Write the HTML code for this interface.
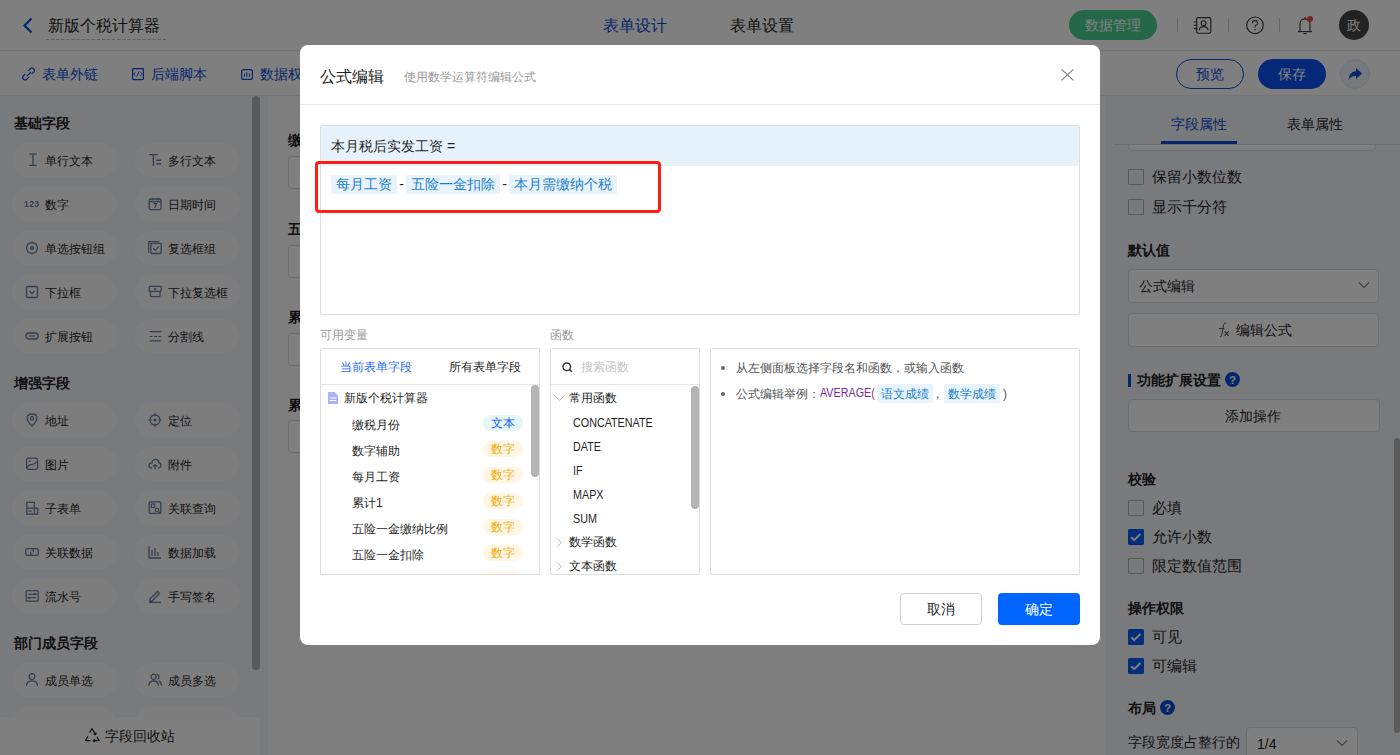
<!DOCTYPE html>
<html><head><meta charset="utf-8">
<style>
*{box-sizing:border-box;margin:0;padding:0}
html,body{width:1400px;height:755px;overflow:hidden;background:#fff;font-family:"Liberation Sans",sans-serif;color:#1f1f1f}
.a{position:absolute}
.t{position:absolute;white-space:nowrap;line-height:1}
#hdr{left:0;top:0;width:1400px;height:51px;background:#fff;border-bottom:1px solid #e8e8e8}
#tb{left:0;top:51px;width:1400px;height:45px;background:#fff;border-bottom:1px solid #eaeaea}
#lp{left:0;top:96px;width:268px;height:659px;background:#f3f4f8}
#cv{left:268px;top:96px;width:838px;height:659px;background:#fdfdfd}
#rp{left:1106px;top:96px;width:294px;height:659px;background:#f3f4f8}
.pill{position:absolute;width:105px;height:34px;border-radius:17px;background:#fbfbfd}
.pill .ic{position:absolute;left:13px;top:10px;width:14px;height:14px}
.pill .tx{position:absolute;left:33px;top:11px;font-size:12px;line-height:14px;color:#1f1f1f;white-space:nowrap}
.sec{position:absolute;left:14px;font-size:14px;font-weight:bold;color:#222;line-height:14px}
#ov{left:0;top:0;width:1400px;height:755px;background:rgba(0,0,0,0.5)}
#md{left:300px;top:45px;width:800px;height:600px;background:#fff;border-radius:8px}
.cb{position:absolute;left:1128px;width:16px;height:16px;border:1px solid #b0b0b0;border-radius:1px;background:transparent}
.cb.on{background:#0a5cf5;border-color:#0a5cf5;border-radius:1px}
.rl{position:absolute;left:1152px;font-size:14.7px;line-height:14px;color:#1f1f1f;white-space:nowrap}
.rh{position:absolute;left:1128px;font-size:14px;font-weight:bold;line-height:14px;color:#222;white-space:nowrap}
.tag{position:absolute;left:483px;width:40px;margin-top:-1px;height:16px;border-radius:8px;font-size:12px;line-height:16px;text-align:center}
.tag.n{background:#fff6e3;color:#f5ab0c}
.tag.s{background:#e5f7f7;color:#1660ff}
.vr{position:absolute;left:352px;margin-top:1px;font-size:12px;line-height:12px;color:#1f1f1f;white-space:nowrap}
.fn{position:absolute;left:573px;margin-top:1px;font-size:12.5px;transform:scaleX(0.86);transform-origin:0 0;line-height:12px;color:#1f1f1f;white-space:nowrap}
.tok{display:inline-block;background:#e8f3fc;color:#1a7fd0;padding:0 5px;border-radius:2px;height:19px;line-height:19px}
</style></head><body>
<!-- header -->
<div id="hdr" class="a"></div>
<svg class="a" style="left:22px;top:17px" width="12" height="17" viewBox="0 0 12 17"><path d="M9.5 1.5 L2.5 8.5 L9.5 15.5" fill="none" stroke="#0a4dd6" stroke-width="2.2"/></svg>
<div class="t" style="left:48px;top:18px;font-size:16px;color:#1f1f1f">新版个税计算器</div>
<div class="a" style="left:46px;top:39px;width:120px;border-top:1px dashed #bbb"></div>
<div class="t" style="left:603px;top:18px;font-size:16px;color:#0a4dd6">表单设计</div>
<div class="t" style="left:730px;top:18px;font-size:16px;color:#1f1f1f">表单设置</div>
<div class="a" style="left:1069px;top:10px;width:88px;height:30px;border-radius:15px;background:#48cf93"></div>
<div class="t" style="left:1085px;top:18px;font-size:14px;color:#fff">数据管理</div>
<div class="a" style="left:1177px;top:18px;width:1px;height:14px;background:#ccc"></div>
<div class="a" style="left:1228px;top:18px;width:1px;height:14px;background:#ccc"></div>
<div class="a" style="left:1279px;top:18px;width:1px;height:14px;background:#ccc"></div>
<svg class="a" style="left:1190px;top:10px" width="130" height="30" viewBox="1190 10 130 30">
<rect x="1196.6" y="17.6" width="14.2" height="15.6" rx="1.6" fill="none" stroke="#3a3a3a" stroke-width="1.15"/>
<path d="M1193.8 22h3.4M1193.8 25.3h3.4M1193.8 28.6h3.4" stroke="#3a3a3a" stroke-width="1.1"/>
<circle cx="1203.6" cy="23.2" r="2.4" fill="none" stroke="#3a3a3a" stroke-width="1.1"/>
<path d="M1199.2 30.2Q1199.6 26.6 1203.6 26.6Q1207.6 26.6 1208 30.2" fill="none" stroke="#3a3a3a" stroke-width="1.1"/>
<circle cx="1255" cy="25.3" r="8.3" fill="none" stroke="#3a3a3a" stroke-width="1.15"/>
<path d="M1252.4 23.2Q1252.4 20.6 1255 20.6Q1257.6 20.6 1257.6 23Q1257.6 24.6 1255.6 25.6Q1255 26 1255 27.6" fill="none" stroke="#3a3a3a" stroke-width="1.15"/>
<circle cx="1255" cy="29.8" r="0.8" fill="#333"/>
<path d="M1300 31.5V24Q1300 19 1305 19Q1310 19 1310 24V31.5" fill="none" stroke="#3a3a3a" stroke-width="1.15"/>
<path d="M1298 31.6h14" stroke="#3a3a3a" stroke-width="1.15"/>
<path d="M1305 17v2" stroke="#3a3a3a" stroke-width="1.1"/>
<path d="M1303.4 33.6h3.2" stroke="#3a3a3a" stroke-width="1.1"/>
<circle cx="1310" cy="19" r="3" fill="#f04a46"/>
</svg>
<div class="a" style="left:1339px;top:10px;width:30px;height:30px;border-radius:15px;background:#454545"></div>
<div class="t" style="left:1347px;top:18px;font-size:14px;color:#fff">政</div>
<!-- toolbar -->
<div id="tb" class="a"></div>
<svg class="a" style="left:20px;top:65px" width="17" height="17" viewBox="20 65 17 17"><path d="M28.2 70.8L30.3 68.7Q32 67.2 33.6 68.8Q35.2 70.4 33.7 72.1L31.6 74.2M28.8 77.2L26.7 79.3Q25 80.8 23.4 79.2Q21.8 77.6 23.3 75.9L25.4 73.8M26.8 76.2L31 72" fill="none" stroke="#0a4dd6" stroke-width="1.2"/></svg>
<div class="t" style="left:42px;top:67px;font-size:14px;color:#0a4dd6">表单外链</div>
<svg class="a" style="left:130px;top:65px" width="17" height="17" viewBox="130 65 17 17"><rect x="132.6" y="68.6" width="10.8" height="11" rx="0.8" fill="none" stroke="#0a4dd6" stroke-width="1.2"/><path d="M135.4 72.4L133.6 74.2L135.4 75.8M140.6 72.4L142.4 74.2L140.6 75.8M139.2 71.4L136.8 76.6" fill="none" stroke="#0a4dd6" stroke-width="1"/></svg>
<div class="t" style="left:151px;top:67px;font-size:14px;color:#0a4dd6">后端脚本</div>
<svg class="a" style="left:238px;top:65px" width="17" height="17" viewBox="238 65 17 17"><rect x="241.6" y="69.6" width="10.8" height="9.8" rx="2" fill="none" stroke="#0a4dd6" stroke-width="1.2"/><path d="M244.4 73.6V76.8M246.8 72.2V76.8M249.4 73.6V76.8" stroke="#0a4dd6" stroke-width="1"/></svg>
<div class="t" style="left:260px;top:67px;font-size:14px;color:#0a4dd6">数据权限</div>
<div class="a" style="left:1176px;top:59px;width:68px;height:30px;border-radius:15px;border:1px solid #0a4dd6;background:#fff"></div>
<div class="t" style="left:1196px;top:67px;font-size:14px;color:#0a4dd6">预览</div>
<div class="a" style="left:1258px;top:59px;width:68px;height:30px;border-radius:15px;background:#0a52f0"></div>
<div class="t" style="left:1278px;top:67px;font-size:14px;color:#fff">保存</div>
<div class="a" style="left:1340px;top:59px;width:30px;height:30px;border-radius:15px;background:#eef2fa;border:1px solid #dde3f0"></div>
<svg class="a" style="left:1347px;top:66px" width="16" height="16" viewBox="0 0 16 16"><path d="M9 2 L15 7.5 L9 13 L9 10 Q4 9.5 1.5 14 Q2 6 9 5 Z" fill="#0a4dd6"/></svg>
<!-- panels -->
<div id="lp" class="a"></div>
<div id="cv" class="a"></div>
<div class="sec" style="top:116px">基础字段</div>
<div class="pill" style="left:12px;top:143px"><svg class="ic" viewBox="0 0 14 14"><path d="M4.2 1.2h7.6M4.2 12.4h7.6M8 1.2v11.2" stroke="#6d7c9e" stroke-width="1.3" fill="none"/></svg><div class="tx">单行文本</div></div>
<div class="pill" style="left:135px;top:143px"><svg class="ic" viewBox="0 0 14 14"><path d="M1.2 1.6h8.4M5.4 1.6V13.2M8.2 7.2h5M8.2 10.8h5" stroke="#6d7c9e" stroke-width="1.4" fill="none"/></svg><div class="tx">多行文本</div></div>
<div class="pill" style="left:12px;top:187px"><svg class="ic" style="left:12px;width:16px" viewBox="0 0 16 14"><text x="0" y="9.6" font-size="8.5" font-weight="bold" fill="#6d7c9e" font-family="Liberation Sans" textLength="15">123</text></svg><div class="tx">数字</div></div>
<div class="pill" style="left:135px;top:187px"><svg class="ic" viewBox="0 0 14 14"><rect x="1.2" y="2" width="11.8" height="10.6" rx="1.6" fill="none" stroke="#6d7c9e" stroke-width="1.3"/><path d="M1.2 4.6h11.8M4 0.8v2.6M10.2 0.8v2.6M5.6 6.6h3L6.6 10.8" fill="none" stroke="#6d7c9e" stroke-width="1.2"/></svg><div class="tx">日期时间</div></div>
<div class="pill" style="left:12px;top:231px"><svg class="ic" viewBox="0 0 14 14"><circle cx="7" cy="7" r="5.5" fill="none" stroke="#6d7c9e" stroke-width="1.3"/><circle cx="7" cy="7" r="2" fill="#6d7c9e"/></svg><div class="tx">单选按钮组</div></div>
<div class="pill" style="left:135px;top:231px"><svg class="ic" viewBox="0 0 14 14"><path d="M0.7 12V0.7h10.6" fill="none" stroke="#6d7c9e" stroke-width="1.2"/><rect x="2.9" y="2.3" width="10.2" height="10.2" rx="0.8" fill="none" stroke="#6d7c9e" stroke-width="1.3"/><path d="M5.2 7.2l2 2L11 5.4" fill="none" stroke="#6d7c9e" stroke-width="1.3"/></svg><div class="tx">复选框组</div></div>
<div class="pill" style="left:12px;top:275px"><svg class="ic" viewBox="0 0 14 14"><rect x="1.5" y="1.5" width="11" height="11" rx="1" fill="none" stroke="#6d7c9e" stroke-width="1.3"/><path d="M4.5 6l2.5 2.5L9.5 6" fill="none" stroke="#6d7c9e" stroke-width="1.3"/></svg><div class="tx">下拉框</div></div>
<div class="pill" style="left:135px;top:275px"><svg class="ic" viewBox="0 0 14 14"><rect x="1.2" y="1.4" width="12" height="5" rx="0.8" fill="none" stroke="#6d7c9e" stroke-width="1.3"/><path d="M2.4 6.4V10.8Q2.4 11.6 3.2 11.6H11.2Q12 11.6 12 10.8V6.4M6 3.4l1.2 1.2L8.4 3.4" fill="none" stroke="#6d7c9e" stroke-width="1.3"/></svg><div class="tx">下拉复选框</div></div>
<div class="pill" style="left:12px;top:319px"><svg class="ic" viewBox="0 0 14 14"><rect x="0.8" y="4" width="12.4" height="6" rx="3" fill="none" stroke="#6d7c9e" stroke-width="1.4"/><path d="M4 7h6" stroke="#6d7c9e" stroke-width="1.2"/></svg><div class="tx">扩展按钮</div></div>
<div class="pill" style="left:135px;top:319px"><svg class="ic" viewBox="0 0 14 14"><path d="M1.6 2.7h11.8M1.6 7.5h3M6.1 7.5h3M10.4 7.5h3M1.6 11.8h11.8" stroke="#6d7c9e" stroke-width="1.2"/></svg><div class="tx">分割线</div></div>
<div class="sec" style="top:376px">增强字段</div>
<div class="pill" style="left:12px;top:403px"><svg class="ic" viewBox="0 0 14 14"><path d="M7 13 Q2 8 2 5.5 Q2 1 7 1 Q12 1 12 5.5 Q12 8 7 13Z" fill="none" stroke="#6d7c9e" stroke-width="1.3"/><circle cx="7" cy="5.5" r="1.8" fill="none" stroke="#6d7c9e" stroke-width="1.2"/></svg><div class="tx">地址</div></div>
<div class="pill" style="left:135px;top:403px"><svg class="ic" viewBox="0 0 14 14"><circle cx="7" cy="7" r="5" fill="none" stroke="#6d7c9e" stroke-width="1.3"/><circle cx="7" cy="7" r="1.5" fill="#6d7c9e"/><path d="M7 0.5v3M7 10.5v3M0.5 7h3M10.5 7h3" stroke="#6d7c9e" stroke-width="1.2"/></svg><div class="tx">定位</div></div>
<div class="pill" style="left:12px;top:447px"><svg class="ic" viewBox="0 0 14 14"><rect x="1.6" y="1.2" width="11" height="11.2" rx="1.8" fill="none" stroke="#6d7c9e" stroke-width="1.3"/><path d="M2.4 10.6Q4 7 6.6 7.6Q9 8 11.8 4.6" fill="none" stroke="#6d7c9e" stroke-width="1.2"/><circle cx="4.6" cy="4.2" r="0.9" fill="#6d7c9e"/></svg><div class="tx">图片</div></div>
<div class="pill" style="left:135px;top:447px"><svg class="ic" viewBox="0 0 14 14"><path d="M4 11 Q0.5 11 1 8 Q1.5 5.5 4 6 Q4.5 2 8 2.5 Q11 3 11 6 Q13.5 6.5 13 9 Q12.5 11 10 11" fill="none" stroke="#6d7c9e" stroke-width="1.3"/><path d="M7 12.5V7.5M5 9.5l2-2 2 2" fill="none" stroke="#6d7c9e" stroke-width="1.2"/></svg><div class="tx">附件</div></div>
<div class="pill" style="left:12px;top:491px"><svg class="ic" viewBox="0 0 14 14"><path d="M1.8 13.2V1.4H9.4V13.2ZM9.4 7.2h3.4v6H9.4M1.8 7.2h7.6M3.6 10.2h3" fill="none" stroke="#6d7c9e" stroke-width="1.3"/></svg><div class="tx">子表单</div></div>
<div class="pill" style="left:135px;top:491px"><svg class="ic" viewBox="0 0 14 14"><rect x="1.2" y="0.8" width="11.6" height="11.6" rx="1" fill="none" stroke="#6d7c9e" stroke-width="1.3"/><rect x="3.4" y="3" width="3.4" height="3.4" fill="none" stroke="#6d7c9e" stroke-width="1.1"/><circle cx="9" cy="9" r="1.8" fill="#fbfbfd" stroke="#6d7c9e" stroke-width="1.1"/><path d="M10.3 10.3l2.4 2.4" stroke="#6d7c9e" stroke-width="1.2"/></svg><div class="tx">关联查询</div></div>
<div class="pill" style="left:12px;top:535px"><svg class="ic" viewBox="0 0 14 14"><path d="M6.6 10.4H2.2Q0.8 10.4 0.8 9V5Q0.8 3.6 2.2 3.6H7Q8.4 3.6 8.4 5V7.6M7.4 3.6H11.8Q13.2 3.6 13.2 5V9Q13.2 10.4 11.8 10.4H7Q5.6 10.4 5.6 9V6.4" fill="none" stroke="#6d7c9e" stroke-width="1.3"/></svg><div class="tx">关联数据</div></div>
<div class="pill" style="left:135px;top:535px"><svg class="ic" viewBox="0 0 14 14"><path d="M1 1v12h12M4 11V5M7 11V3M10 11V7" fill="none" stroke="#6d7c9e" stroke-width="1.3"/></svg><div class="tx">数据加载</div></div>
<div class="pill" style="left:12px;top:579px"><svg class="ic" viewBox="0 0 14 14"><rect x="1.2" y="1.6" width="12" height="10.6" rx="1" fill="none" stroke="#6d7c9e" stroke-width="1.3"/><path d="M3.2 5.4h7.8L9.4 4M11 8.6H3.2L4.8 10" fill="none" stroke="#6d7c9e" stroke-width="1.1"/></svg><div class="tx">流水号</div></div>
<div class="pill" style="left:135px;top:579px"><svg class="ic" viewBox="0 0 14 14"><path d="M2 10 L9.5 2.5 L11.5 4.5 L4 12 H2Z M1 13.5h12" fill="none" stroke="#6d7c9e" stroke-width="1.3"/></svg><div class="tx">手写签名</div></div>
<div class="sec" style="top:636px">部门成员字段</div>
<div class="pill" style="left:12px;top:663px"><svg class="ic" viewBox="0 0 14 14"><circle cx="7" cy="3.6" r="2.9" fill="none" stroke="#6d7c9e" stroke-width="1.3"/><path d="M1.4 12.8Q1.6 7.8 7 7.8Q12.4 7.8 12.6 12.8" fill="none" stroke="#6d7c9e" stroke-width="1.3"/></svg><div class="tx">成员单选</div></div>
<div class="pill" style="left:135px;top:663px"><svg class="ic" viewBox="0 0 14 14"><circle cx="5.6" cy="3.8" r="2.6" fill="none" stroke="#6d7c9e" stroke-width="1.3"/><path d="M0.8 12.6Q1 8 5.6 8Q10.2 8 10.4 12.6M8.6 1.4Q11 1.6 11 3.9Q11 5.6 9.4 6.2M10.6 7.8Q13.2 8.6 13.4 12.6" fill="none" stroke="#6d7c9e" stroke-width="1.3"/></svg><div class="tx">成员多选</div></div>
<div class="pill" style="left:12px;top:707px"><svg class="ic" viewBox="0 0 14 14"><circle cx="7" cy="4.5" r="3" fill="none" stroke="#6d7c9e" stroke-width="1.3"/><path d="M1.5 13.5 Q1.5 8.5 7 8.5 Q12.5 8.5 12.5 13.5" fill="none" stroke="#6d7c9e" stroke-width="1.3"/></svg><div class="tx">部门单选</div></div>
<div class="pill" style="left:135px;top:707px"><svg class="ic" viewBox="0 0 14 14"><circle cx="5.5" cy="4.5" r="2.7" fill="none" stroke="#6d7c9e" stroke-width="1.3"/><path d="M0.8 13 Q0.8 8.5 5.5 8.5 Q10.2 8.5 10.2 13 M9 2 Q11.5 2.5 11 5.5 M11 8.5 Q13.5 9.5 13.5 13" fill="none" stroke="#6d7c9e" stroke-width="1.3"/></svg><div class="tx">部门多选</div></div>
<div class="a" style="left:252px;top:96px;width:8px;height:574px;border-radius:4px;background:#b4b4b4"></div>
<div class="a" style="left:0;top:717px;width:260px;height:38px;background:#fff"></div>
<svg class="a" style="left:82px;top:726px" width="20" height="18" viewBox="82 726 20 18"><path d="M89.6 732.6L92 728.6L95.4 734.4M93.6 734.2L95.6 734.6L96.2 732.6M97 736.8L99 740.6H93.4M94.8 739.2L93.2 740.6L94.8 742M90.6 740.6H85.4L88 736.2" fill="none" stroke="#222" stroke-width="1.2" stroke-linejoin="round"/></svg>
<div class="t" style="left:105px;top:729px;font-size:14px;color:#1f1f1f">字段回收站</div>
<div id="rp" class="a"></div>
<div class="t" style="left:288px;top:133px;font-size:14px;font-weight:bold;color:#1f1f1f">缴税月份</div>
<div class="a" style="left:288px;top:156px;width:300px;height:33px;border:1px solid #d9d9d9;border-radius:4px;background:#fff"></div>
<div class="t" style="left:288px;top:222px;font-size:14px;font-weight:bold;color:#1f1f1f">五险一金缴纳比例</div>
<div class="a" style="left:288px;top:245px;width:300px;height:33px;border:1px solid #d9d9d9;border-radius:4px;background:#fff"></div>
<div class="t" style="left:288px;top:310px;font-size:14px;font-weight:bold;color:#1f1f1f">累计1</div>
<div class="a" style="left:288px;top:333px;width:300px;height:33px;border:1px solid #d9d9d9;border-radius:4px;background:#fff"></div>
<div class="t" style="left:288px;top:398px;font-size:14px;font-weight:bold;color:#1f1f1f">累计2</div>
<div class="a" style="left:288px;top:420px;width:300px;height:33px;border:1px solid #d9d9d9;border-radius:4px;background:#fff"></div>
<div class="a" style="left:1128px;top:131px;width:248px;height:20px;border:1px solid #ddd;border-radius:4px;background:#fff"></div>
<div class="a" style="left:1106px;top:96px;width:294px;height:48px;background:#f3f4f8"></div>
<div class="t" style="left:1171px;top:117px;font-size:14px;color:#0a4dd6">字段属性</div>
<div class="t" style="left:1287px;top:117px;font-size:14px;color:#1f1f1f">表单属性</div>
<div class="a" style="left:1114px;top:144px;width:286px;height:1px;background:#dcdcdc"></div>
<div class="a" style="left:1161px;top:141px;width:76px;height:3px;background:#0a4dd6"></div>
<div class="cb" style="top:169px"></div><div class="rl" style="top:170px">保留小数位数</div>
<div class="cb" style="top:199px"></div><div class="rl" style="top:200px">显示千分符</div>
<div class="rh" style="top:243px">默认值</div>
<div class="a" style="left:1128px;top:269px;width:251px;height:34px;border:1px solid #ddd;border-radius:4px;background:#fff"></div>
<div class="t" style="left:1139px;top:279px;font-size:14px;color:#1f1f1f">公式编辑</div>
<svg class="a" style="left:1358px;top:281px" width="12" height="8" viewBox="0 0 12 8"><path d="M1 1.5l5 5 5-5" fill="none" stroke="#888" stroke-width="1.2"/></svg>
<div class="a" style="left:1128px;top:313px;width:251px;height:34px;border:1px solid #ddd;border-radius:4px;background:#fff"></div>
<svg class="a" style="left:1216px;top:321px" width="16" height="17" viewBox="1216 321 16 17"><path d="M1226.2 323.2Q1224.2 322.6 1223.6 325L1221.6 335.6Q1221 337 1219.8 336.6M1218.8 328.6h5.6" fill="none" stroke="#555" stroke-width="1"/><path d="M1224.6 331.4l4 4.4M1228.6 331.4l-4 4.4" stroke="#555" stroke-width="1.1"/></svg>
<div class="t" style="left:1236px;top:323px;font-size:14px;color:#1f1f1f">编辑公式</div>
<div class="a" style="left:1128px;top:374px;width:3px;height:13px;background:#0a4dd6"></div>
<div class="rh" style="left:1137px;top:373px">功能扩展设置</div>
<svg class="a" style="left:1225px;top:372px" width="15" height="15" viewBox="0 0 15 15"><circle cx="7.5" cy="7.5" r="7.5" fill="#0a4dd6"/><text x="7.5" y="11.5" font-size="11" font-weight="bold" text-anchor="middle" fill="#fff" font-family="Liberation Sans">?</text></svg>
<div class="a" style="left:1128px;top:399px;width:252px;height:33px;border:1px solid #ddd;border-radius:4px;background:#fff"></div>
<div class="t" style="left:1225px;top:409px;font-size:14px;color:#1f1f1f">添加操作</div>
<div class="rh" style="top:472px">校验</div>
<div class="cb" style="top:500px"></div><div class="rl" style="top:501px">必填</div>
<div class="cb on" style="top:529px"><svg width="14" height="14" viewBox="0 0 14 14" style="position:absolute;left:0;top:0"><path d="M2.2 7.2l3 3 6.2-6.2" fill="none" stroke="#fff" stroke-width="2"/></svg></div><div class="rl" style="top:530px">允许小数</div>
<div class="cb" style="top:558px"></div><div class="rl" style="top:559px">限定数值范围</div>
<div class="rh" style="top:601px">操作权限</div>
<div class="cb on" style="top:629px"><svg width="14" height="14" viewBox="0 0 14 14" style="position:absolute;left:0;top:0"><path d="M2.2 7.2l3 3 6.2-6.2" fill="none" stroke="#fff" stroke-width="2"/></svg></div><div class="rl" style="top:630px">可见</div>
<div class="cb on" style="top:658px"><svg width="14" height="14" viewBox="0 0 14 14" style="position:absolute;left:0;top:0"><path d="M2.2 7.2l3 3 6.2-6.2" fill="none" stroke="#fff" stroke-width="2"/></svg></div><div class="rl" style="top:659px">可编辑</div>
<div class="rh" style="top:701px">布局</div>
<svg class="a" style="left:1160px;top:700px" width="15" height="15" viewBox="0 0 15 15"><circle cx="7.5" cy="7.5" r="7.5" fill="#0a4dd6"/><text x="7.5" y="11.5" font-size="11" font-weight="bold" text-anchor="middle" fill="#fff" font-family="Liberation Sans">?</text></svg>
<div class="t" style="left:1128px;top:735px;font-size:14px;color:#1f1f1f">字段宽度占整行的</div>
<div class="a" style="left:1246px;top:727px;width:112px;height:34px;border:1px solid #ddd;border-radius:4px;background:#fff"></div>
<div class="t" style="left:1257px;top:737px;font-size:14px;color:#1f1f1f">1/4</div>
<svg class="a" style="left:1336px;top:739px" width="12" height="8" viewBox="0 0 12 8"><path d="M1 1.5l5 5 5-5" fill="none" stroke="#888" stroke-width="1.2"/></svg>
<div class="a" style="left:1394px;top:438px;width:6px;height:295px;border-radius:3px;background:#b4b4b4"></div>
<div id="ov" class="a"></div>
<div id="md" class="a"></div>
<div class="t" style="left:320px;top:69px;font-size:16px;color:#222">公式编辑</div>
<div class="t" style="left:404px;top:71px;font-size:12px;color:#999">使用数学运算符编辑公式</div>
<svg class="a" style="left:1058px;top:66px" width="20" height="18" viewBox="1058 66 20 18"><path d="M1061.6 69.4L1073.4 80.4M1073.4 69.4L1061.6 80.4" stroke="#7a7a7a" stroke-width="1.1"/></svg>
<div class="a" style="left:300px;top:104px;width:800px;height:1px;background:#e8e8e8"></div>
<div class="a" style="left:320px;top:125px;width:760px;height:190px;border:1px solid #ddd;border-radius:2px;background:#fff"></div>
<div class="a" style="left:321px;top:126px;width:758px;height:40px;background:#e6f3fd"></div>
<div class="t" style="left:331px;top:139px;font-size:14px;color:#1f1f1f">本月税后实发工资 =</div>
<div class="t" style="left:331px;top:175px;font-size:14px;color:#1f1f1f"><span class="tok">每月工资</span><span style="display:inline-block;width:9px;text-align:center">-</span><span class="tok">五险一金扣除</span><span style="display:inline-block;width:9px;text-align:center">-</span><span class="tok">本月需缴纳个税</span></div>
<div class="a" style="left:315px;top:161px;width:346px;height:52px;border:3px solid #fe1d12;border-radius:4px"></div>
<div class="t" style="left:320px;top:329px;font-size:12px;color:#999">可用变量</div>
<div class="t" style="left:550px;top:329px;font-size:12px;color:#999">函数</div>
<div class="a" style="left:320px;top:348px;width:220px;height:227px;border:1px solid #ddd;border-radius:2px;background:#fff"></div>
<div class="a" style="left:321px;top:384px;width:218px;height:1px;background:#e5e5e5"></div>
<div class="t" style="left:340px;top:361px;font-size:12px;color:#1f6bff">当前表单字段</div>
<div class="t" style="left:449px;top:361px;font-size:12px;color:#1f1f1f">所有表单字段</div>
<svg class="a" style="left:328px;top:392px" width="10" height="12" viewBox="0 0 10 12"><path d="M0 0h6.5L10 3.5V12H0Z" fill="#a9b3f7"/><path d="M2 6h6M2 8.5h6" stroke="#fff" stroke-width="1"/></svg>
<div class="t" style="left:344px;top:392px;font-size:12px;color:#1f1f1f">新版个税计算器</div>
<div class="vr" style="top:418px">缴税月份</div>
<div class="tag s" style="top:416px">文本</div>
<div class="vr" style="top:444px">数字辅助</div>
<div class="tag n" style="top:442px">数字</div>
<div class="vr" style="top:470px">每月工资</div>
<div class="tag n" style="top:468px">数字</div>
<div class="vr" style="top:496px">累计1</div>
<div class="tag n" style="top:494px">数字</div>
<div class="vr" style="top:522px">五险一金缴纳比例</div>
<div class="tag n" style="top:520px">数字</div>
<div class="vr" style="top:548px">五险一金扣除</div>
<div class="tag n" style="top:546px">数字</div>
<div class="tag n" style="top:572px"></div>
<div class="a" style="left:320px;top:574px;width:220px;height:60px;background:#fff;border-top:1px solid #ddd"></div>
<div class="a" style="left:531px;top:385px;width:8px;height:92px;border-radius:4px;background:#b4b4b4"></div>
<div class="a" style="left:550px;top:348px;width:150px;height:227px;border:1px solid #ddd;border-radius:2px;background:#fff"></div>
<div class="a" style="left:551px;top:384px;width:148px;height:1px;background:#e5e5e5"></div>
<svg class="a" style="left:562px;top:362px" width="11" height="11" viewBox="0 0 11 11"><circle cx="4.8" cy="4.8" r="3.8" fill="none" stroke="#333" stroke-width="1.4"/><path d="M7.5 7.5l2.5 2.5" stroke="#333" stroke-width="1.4"/></svg>
<div class="t" style="left:581px;top:361px;font-size:12px;color:#c4c4c4">搜索函数</div>
<svg class="a" style="left:554px;top:395px" width="11" height="7" viewBox="0 0 11 7"><path d="M0.5 0.5l5 5 5-5" fill="none" stroke="#bbb" stroke-width="1"/></svg>
<div class="t" style="left:569px;top:392px;font-size:12px;color:#1f1f1f">常用函数</div>
<div class="fn" style="top:416px">CONCATENATE</div>
<div class="fn" style="top:440px">DATE</div>
<div class="fn" style="top:464px">IF</div>
<div class="fn" style="top:488px">MAPX</div>
<div class="fn" style="top:512px">SUM</div>
<svg class="a" style="left:557px;top:538px" width="5" height="9" viewBox="0 0 5 9"><path d="M0.5 0.5l4 4-4 4" fill="none" stroke="#bbb" stroke-width="1"/></svg>
<div class="t" style="left:569px;top:536px;font-size:12px;color:#1f1f1f">数学函数</div>
<svg class="a" style="left:557px;top:562px" width="5" height="9" viewBox="0 0 5 9"><path d="M0.5 0.5l4 4-4 4" fill="none" stroke="#bbb" stroke-width="1"/></svg>
<div class="t" style="left:569px;top:560px;font-size:12px;color:#1f1f1f">文本函数</div>
<div class="a" style="left:691px;top:386px;width:8px;height:123px;border-radius:4px;background:#b4b4b4"></div>
<div class="a" style="left:710px;top:348px;width:370px;height:227px;border:1px solid #ddd;border-radius:2px;background:#fff"></div>
<div class="a" style="left:721px;top:366px;width:4px;height:4px;border-radius:2px;background:#666"></div>
<div class="t" style="left:736px;top:362px;font-size:12px;color:#555">从左侧面板选择字段名和函数，或输入函数</div>
<div class="a" style="left:721px;top:392px;width:4px;height:4px;border-radius:2px;background:#666"></div>
<div class="t" style="left:736px;top:388px;font-size:12px;color:#555">公式编辑举例：</div>
<div class="t" style="left:820px;top:387px;font-size:12.5px;color:#7d2a8f;transform:scaleX(0.86);transform-origin:0 0">AVERAGE(</div>
<div class="a" style="left:877px;top:384px;width:56px;height:19px;border-radius:2px;background:#e8f3fc"></div>
<div class="t" style="left:881px;top:388px;font-size:12px;color:#1a7fd0">语文成绩</div>
<div class="t" style="left:936px;top:388px;font-size:12px;color:#555">,</div>
<div class="a" style="left:944px;top:384px;width:56px;height:19px;border-radius:2px;background:#e8f3fc"></div>
<div class="t" style="left:948px;top:388px;font-size:12px;color:#1a7fd0">数学成绩</div>
<div class="t" style="left:1003px;top:388px;font-size:12px;color:#555">)</div>
<div class="a" style="left:900px;top:593px;width:82px;height:32px;border:1px solid #d0d0d0;border-radius:4px;background:#fff"></div>
<div class="t" style="left:927px;top:602px;font-size:14px;color:#1f1f1f">取消</div>
<div class="a" style="left:998px;top:593px;width:82px;height:32px;border-radius:4px;background:#0064ff"></div>
<div class="t" style="left:1025px;top:602px;font-size:14px;color:#fff">确定</div>
</body></html>
